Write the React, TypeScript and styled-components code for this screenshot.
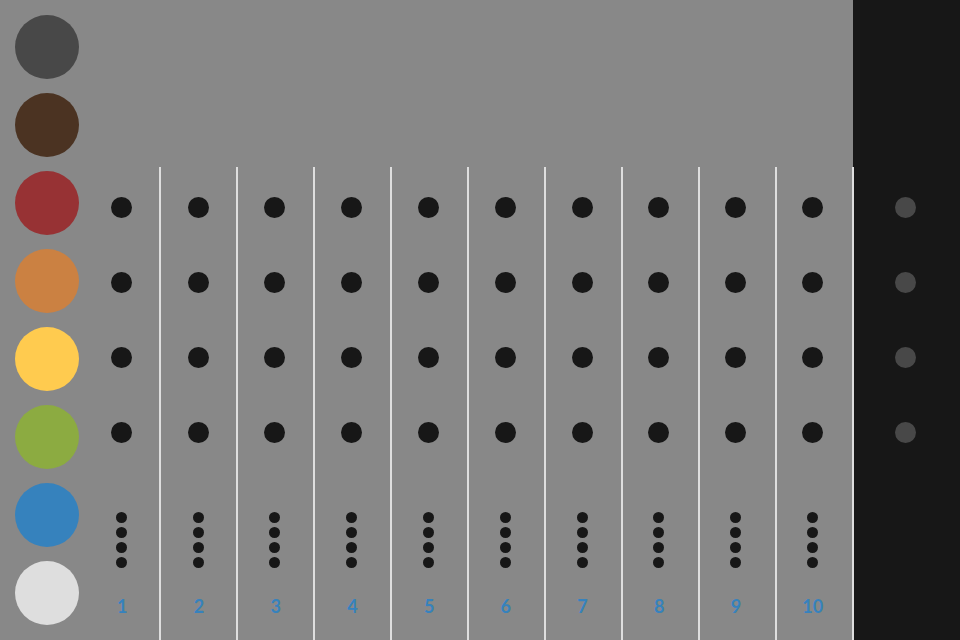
import React, { useState } from "react";
import styled, { createGlobalStyle } from "styled-components";

const PALETTE = [
  { name: "Grey", color: "#484848" },
  { name: "Brown", color: "#4b3322" },
  { name: "Red", color: "#973234" },
  { name: "Orange", color: "#cb8142" },
  { name: "Yellow", color: "#ffcb4f" },
  { name: "Green", color: "#8cab41" },
  { name: "Blue", color: "#3682bd" },
  { name: "White", color: "#dedede" },
];

const EMPTY = "#171717";
const TURNS = Array.from({ length: 10 }, (_, i) => i + 1);
const SLOTS = [0, 1, 2, 3];

const GlobalStyle = createGlobalStyle`
  *, *::before, *::after { box-sizing: border-box; }
  body {
    margin: 0;
    background: #888888;
    font-family: Lato, "Open Sans", sans-serif;
  }
  button { font: inherit; border: 0; padding: 0; margin: 0; cursor: pointer; }
`;

const Page = styled.div`
  display: flex;
  min-height: 100vh;
`;

const Palette = styled.nav`
  display: flex;
  flex-direction: column;
  justify-content: space-between;
  padding: 15px 4px 15px 15px;
`;

const Swatch = styled.button<{ $color: string }>`
  width: 64px;
  height: 64px;
  border-radius: 50%;
  background: ${(p) => p.$color};
`;

const Board = styled.main`
  flex: 1;
  display: grid;
  grid-template-columns: minmax(0, 1fr);
  grid-template-rows: 167px 1fr;
  grid-template-areas: "." "play";
`;

const Lanes = styled.div`
  grid-area: play;
  z-index: 1;
  display: grid;
  grid-template-columns: repeat(10, minmax(0, 1fr));
  margin: 0 -1px 0 1px;
  pointer-events: none;
`;

const Lane = styled.div`
  border-right: 2px solid #dedede;
`;

const Play = styled.div`
  grid-area: play;
  padding: 30px 2px 0 0;
`;

const Turns = styled.div`
  display: grid;
  grid-template-columns: repeat(10, minmax(0, 1fr));
`;

const Turn = styled.section`
  display: flex;
  flex-direction: column;
  align-items: center;
  gap: 69px;
`;

const Pegs = styled.div`
  display: flex;
  flex-direction: column;
  justify-content: space-between;
  height: 246px;
`;

const Peg = styled.button<{ $color: string }>`
  width: 21px;
  height: 21px;
  border-radius: 50%;
  background: ${(p) => p.$color};
`;

const Hints = styled.div`
  display: flex;
  flex-direction: column;
  justify-content: space-between;
  height: 56px;
`;

const Hint = styled.span`
  width: 11px;
  height: 11px;
  border-radius: 50%;
  background: ${EMPTY};
`;

const Numbers = styled.div`
  display: grid;
  grid-template-columns: repeat(10, minmax(0, 1fr));
  padding: 26px 0 21px 1px;
`;

const TurnNumber = styled.span`
  color: #3682bd;
  font-size: 18px;
  font-weight: 700;
  line-height: 24px;
  text-align: center;
`;

const Solution = styled.aside`
  width: 107px;
  display: flex;
  flex-direction: column;
  align-items: center;
  padding: 197px 3px 0 0;
  background: ${EMPTY};
`;

export default function App() {
  const [active, setActive] = useState(PALETTE[0].color);
  const [placed, setPlaced] = useState<Record<string, string>>({});

  return (
    <>
      <GlobalStyle />
      <Page>
        <Palette aria-label="Colours">
          {PALETTE.map((c) => (
            <Swatch
              key={c.name}
              type="button"
              aria-label={c.name}
              $color={c.color}
              onClick={() => setActive(c.color)}
            />
          ))}
        </Palette>
        <Board>
          <Lanes aria-hidden="true">
            {TURNS.map((t) => (
              <Lane key={t} />
            ))}
          </Lanes>
          <Play>
            <Turns>
              {TURNS.map((t) => (
                <Turn key={t} aria-label={`Turn ${t}`}>
                  <Pegs>
                    {SLOTS.map((s) => (
                      <Peg
                        key={s}
                        type="button"
                        aria-label={`Turn ${t}, peg ${s + 1}`}
                        $color={placed[`${t}-${s}`] ?? EMPTY}
                        onClick={() => setPlaced({ ...placed, [`${t}-${s}`]: active })}
                      />
                    ))}
                  </Pegs>
                  <Hints>
                    {SLOTS.map((s) => (
                      <Hint key={s} />
                    ))}
                  </Hints>
                </Turn>
              ))}
            </Turns>
            <Numbers>
              {TURNS.map((t) => (
                <TurnNumber key={t}>{t}</TurnNumber>
              ))}
            </Numbers>
          </Play>
        </Board>
        <Solution aria-label="Solution">
          <Pegs>
            {SLOTS.map((s) => (
              <Peg key={s} type="button" aria-label={`Solution peg ${s + 1}`} $color="#484848" />
            ))}
          </Pegs>
        </Solution>
      </Page>
    </>
  );
}
